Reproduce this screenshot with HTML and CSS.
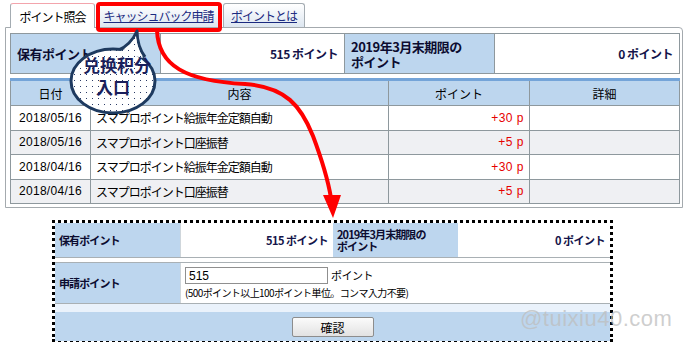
FILE: index.html
```html
<!DOCTYPE html>
<html lang="ja">
<head>
    <meta charset="UTF-8">
    <meta name="viewport" content="width=device-width, initial-scale=1.0">
    <title>ポイント照会</title>
    <link rel="stylesheet" href="styles.css">
</head>
<body>
    <div class="page">
        <div class="tabs">
            <span class="tab tab-active">ポイント照会</span>
            <a class="tab tab-cash" href="#">キャッシュバック申請</a>
            <a class="tab tab-about" href="#">ポイントとは</a>
        </div>

        <div class="panel">
            <table class="summary">
                <colgroup>
                    <col class="col-a"><col class="col-b"><col class="col-c"><col class="col-d">
                </colgroup>
                <tr>
                    <td class="label">保有ポイント</td>
                    <td class="value">515 ポイント</td>
                    <td class="label">2019年3月末期限の<br>ポイント</td>
                    <td class="value">0 ポイント</td>
                </tr>
            </table>

            <table class="history">
                <colgroup>
                    <col class="c-date"><col class="c-desc"><col class="c-pt"><col class="c-more">
                </colgroup>
                <tr class="head">
                    <th>日付</th>
                    <th>内容</th>
                    <th>ポイント</th>
                    <th>詳細</th>
                </tr>
                <tr>
                    <td class="date">2018/05/16</td>
                    <td class="desc">スマプロポイント給振年金定額自動</td>
                    <td class="pt">+30 p</td>
                    <td></td>
                </tr>
                <tr class="alt">
                    <td class="date">2018/05/16</td>
                    <td class="desc">スマプロポイント口座振替</td>
                    <td class="pt">+5 p</td>
                    <td></td>
                </tr>
                <tr>
                    <td class="date">2018/04/16</td>
                    <td class="desc">スマプロポイント給振年金定額自動</td>
                    <td class="pt">+30 p</td>
                    <td></td>
                </tr>
                <tr class="alt">
                    <td class="date">2018/04/16</td>
                    <td class="desc">スマプロポイント口座振替</td>
                    <td class="pt">+5 p</td>
                    <td></td>
                </tr>
            </table>
        </div>

        <div class="apply-box">
            <div class="apply-summary">
                <div class="a-label">保有ポイント</div>
                <div class="a-value a-value-1">515 ポイント</div>
                <div class="a-label">2019年3月末期限の<br>ポイント</div>
                <div class="a-value a-value-2">0 ポイント</div>
            </div>
            <div class="apply-row">
                <div class="a-label">申請ポイント</div>
                <div class="apply-input">
                    <div class="input-line">
                        <input type="text" value="515" class="point-input">
                        <span>ポイント</span>
                    </div>
                    <div class="note">(500ポイント以上100ポイント単位。コンマ入力不要)</div>
                </div>
            </div>
            <div class="strip"></div>
            <div class="confirm-bar">
                <button type="button" class="confirm">確認</button>
            </div>
        </div>

        <!-- callout drawn over the page -->
        <svg class="overlay" width="690" height="344" viewBox="0 0 690 344">
            <defs>
                <pattern id="dots" width="6" height="6" patternUnits="userSpaceOnUse">
                    <rect width="6" height="6" fill="#fff"/>
                    <rect x="2" y="2" width="1" height="1" fill="#2b3b66"/>
                </pattern>
            </defs>
            <rect x="98" y="4" width="122" height="26" rx="2" fill="none" stroke="#f00" stroke-width="4"/>
            <path d="M157,30 C158,66 186,81 245,84 C286,87 301,106 313,136 C322,160 328,180 331,198" fill="none" stroke="#f00" stroke-width="4"/>
            <polygon points="323,195 341,195 333,218" fill="#f00"/>
            <path d="M117,51 Q131,45 137,31 Q137,46 145,57" fill="url(#dots)" stroke="#1e3a5f" stroke-width="3" stroke-linejoin="round"/>
            <ellipse cx="113" cy="81" rx="42" ry="32" fill="url(#dots)" stroke="#1e3a5f" stroke-width="3"/>
            <path d="M119,52 Q131,47 136,36 Q137,48 143,58 Z" fill="url(#dots)"/>
            <text class="bubble-text" x="117" y="72" text-anchor="middle">兑换积分</text>
            <text class="bubble-text" x="113" y="94" text-anchor="middle">入口</text>
        </svg>

        <div class="watermark">@tuixiu40.com</div>
    </div>
</body>
</html>
```

FILE: styles.css
```css
body {
    margin: 0;
    font-family: "Noto Sans CJK JP", sans-serif;
    font-size: 12px;
    color: #000;
    background: #fff;
}
.page {
    position: relative;
    width: 690px;
    height: 344px;
    padding: 3px 0 0 5px;
    box-sizing: border-box;
    overflow: hidden;
}

/* tabs */
.tabs {
    display: flex;
    height: 24px;
    padding-left: 5px;
}
.tab {
    display: flex;
    align-items: center;
    justify-content: center;
    box-sizing: border-box;
    height: 24px;
    border: 1px solid #a4acb2;
    border-bottom: none;
    border-radius: 3px 3px 0 0;
    background: linear-gradient(#ffffff, #dde6f0);
    color: #1b2a80;
    letter-spacing: -1px;
    text-decoration: underline;
}
.tab-active {
    position: relative;
    z-index: 1;
    width: 85px;
    height: 25px;
    background: #fff;
    border-top-color: #f3a4ac;
    color: #000;
    text-decoration: none;
}
.tab-cash {
    width: 121px;
    margin-left: 3px;
}
.tab-about {
    width: 82px;
    margin-left: 4px;
}

/* main panel */
.panel {
    width: 678px;
    height: 181px;
    box-sizing: border-box;
    border: 1px solid #a4aaae;
    border-radius: 0 4px 0 0;
    padding: 5px 4px;
    overflow: hidden;
}
.summary,
.history {
    width: 669px;
    border-collapse: collapse;
    table-layout: fixed;
}
.summary td {
    height: 39px;
    border: 1px solid #8e989d;
    padding: 0 6px;
    overflow: hidden;
}
.label {
    background: #bdd6ee;
    font-weight: bold;
    font-size: 13px;
    line-height: 15px;
    letter-spacing: -0.5px;
    color: #0c0c30;
}
.value {
    background: #fff;
    text-align: right;
    font-weight: bold;
    color: #14144a;
    letter-spacing: -0.5px;
}
.col-a { width: 150px; }
.col-b { width: 184px; }
.col-c { width: 150px; }
.col-d { width: 185px; }

.history {
    margin-top: 4px;
}
.history th {
    height: 24px;
    padding: 0;
    background: #bdd6ee;
    border-top: 3px solid #74a4d8;
    border-left: 1px solid #8e989d;
    border-right: 1px solid #8e989d;
    font-weight: normal;
    font-size: 12px;
}
.history td {
    height: 23.5px;
    border: 1px solid #8e989d;
    padding: 0 5px;
    background: #fff;
    white-space: nowrap;
    overflow: hidden;
}
.history .alt td {
    background: #eff0f3;
}
.c-date { width: 80px; }
.c-desc { width: 298px; }
.c-pt { width: 141px; }
.c-more { width: 150px; }
.date {
    text-align: center;
    font-family: "Liberation Sans", sans-serif;
    letter-spacing: 0.3px;
}
.desc {
    letter-spacing: -1px;
}
.pt {
    text-align: right;
    color: #e60000;
    font-family: "Liberation Sans", sans-serif;
    letter-spacing: 0.5px;
}

/* cashback box */
.apply-box {
    width: 561px;
    height: 122px;
    box-sizing: border-box;
    margin: 12px 0 0 47px;
    padding: 3px;
    background:
        linear-gradient(90deg, #000 50%, transparent 0) top left / 6px 3px repeat-x,
        linear-gradient(90deg, #000 50%, transparent 0) bottom left / 6px 3px repeat-x,
        linear-gradient(#000 50%, transparent 0) top left / 3px 6px repeat-y,
        linear-gradient(#000 50%, transparent 0) top right / 3px 6px repeat-y,
        #fff;
}
.apply-summary {
    display: flex;
    height: 34px;
    border-bottom: 1px solid #a9b0b4;
}
.a-label {
    display: flex;
    align-items: center;
    width: 125px;
    flex-shrink: 0;
    box-sizing: border-box;
    padding-left: 4px;
    background: #bdd6ee;
    font-size: 11px;
    font-weight: bold;
    line-height: 12px;
    letter-spacing: -0.9px;
    color: #0c0c30;
    overflow: hidden;
}
.a-value {
    display: flex;
    align-items: center;
    justify-content: flex-end;
    box-sizing: border-box;
    padding-right: 5px;
    font-size: 11px;
    font-weight: bold;
    letter-spacing: -0.5px;
    color: #14144a;
}
.a-value-1 {
    width: 153px;
    border-left: 1px solid #cfd6db;
}
.a-value-2 {
    flex: 1;
}
.apply-row {
    display: flex;
    height: 40px;
    margin-top: 4px;
    border-top: 1px solid #a9b0b4;
    border-bottom: 1px solid #a9b0b4;
}
.apply-input {
    flex: 1;
    padding: 4px 0 0 4px;
    border-left: 1px solid #cfd6db;
    font-size: 11px;
}
.input-line {
    display: flex;
    align-items: flex-start;
    gap: 3px;
    letter-spacing: -0.5px;
}
.point-input {
    width: 143px;
    height: 17px;
    box-sizing: border-box;
    margin: 0;
    padding: 0 3px;
    border: 1px solid #8f8f8f;
    font-family: "Liberation Sans", sans-serif;
    font-size: 12px;
}
.note {
    margin-top: 1px;
    font-size: 10px;
    letter-spacing: -0.6px;
}
.strip {
    height: 8px;
    background: #eaf2fb;
}
.confirm-bar {
    display: flex;
    justify-content: center;
    align-items: flex-start;
    height: 29px;
    padding-top: 5px;
    box-sizing: border-box;
    background: #bdd6ee;
}
.confirm {
    width: 82px;
    height: 20px;
    padding: 0;
    border: 1px solid #8d8d8d;
    border-radius: 2px;
    background: linear-gradient(#fbfbfb, #e2e2e2);
    font-family: "Noto Sans CJK JP", sans-serif;
    font-size: 12px;
    color: #000;
}

/* overlay callout */
.overlay {
    position: absolute;
    top: 0;
    left: 0;
    pointer-events: none;
}
.bubble-text {
    font-family: "Noto Sans CJK SC", sans-serif;
    font-size: 17px;
    font-weight: bold;
    fill: #1a1f5c;
}
.watermark {
    position: absolute;
    left: 520px;
    top: 306px;
    font-family: "Liberation Sans", sans-serif;
    font-size: 22px;
    color: rgba(190, 190, 190, 0.75);
    letter-spacing: 0.5px;
}
```
